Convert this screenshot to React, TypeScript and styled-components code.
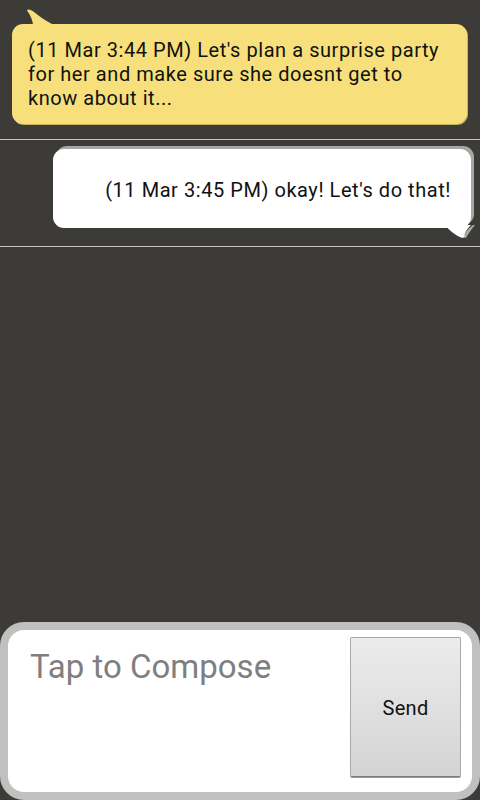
import React from 'react';
import styled, { createGlobalStyle, css } from 'styled-components';

const GlobalStyle = createGlobalStyle`
  html, body {
    margin: 0;
    padding: 0;
    background: #3d3b37;
  }
  * {
    box-sizing: border-box;
  }
`;

type Side = 'in' | 'out';

type Message = {
  id: number;
  side: Side;
  time: string;
  text: string;
};

const messages: Message[] = [
  {
    id: 1,
    side: 'in',
    time: '11 Mar 3:44 PM',
    text: "Let's plan a surprise party for her and make sure she doesnt get to know about it...",
  },
  {
    id: 2,
    side: 'out',
    time: '11 Mar 3:45 PM',
    text: "okay! Let's do that!",
  },
];

const Screen = styled.div`
  width: 480px;
  height: 800px;
  display: flex;
  flex-direction: column;
  background: #3d3b37;
  font-family: Roboto, 'Liberation Sans', sans-serif;
  overflow: hidden;
`;

const Thread = styled.div`
  flex: 1;
  display: flex;
  flex-direction: column;
`;

const Row = styled.div<{ $side: Side }>`
  display: flex;
  border-bottom: 1px solid #c4c4c4;
  ${({ $side }) =>
    $side === 'in'
      ? css`
          justify-content: flex-start;
          padding: 24px 13px 15px 12px;
        `
      : css`
          justify-content: flex-end;
          padding: 9px 9px 18px 53px;
        `}
`;

const Bubble = styled.div<{ $side: Side }>`
  position: relative;
  flex: 1;
  border-radius: 11px;
  font-size: 20px;
  letter-spacing: 0.55px;
  line-height: 24px;
  color: #111;
  ${({ $side }) =>
    $side === 'in'
      ? css`
          background: #f7e07b;
          padding: 14px 12px 14px 16px;
          min-height: 100px;
          box-shadow: 1px 1px 0 #c7b35c;
        `
      : css`
          background: #fff;
          padding: 3px 20px 0;
          height: 79px;
          display: flex;
          align-items: center;
          justify-content: flex-end;
          box-shadow: 3px -3px 0 #a6a6a6;
        `}
`;

const Tail = styled.svg<{ $side: Side }>`
  position: absolute;
  ${({ $side }) =>
    $side === 'in'
      ? css`
          left: 12px;
          top: -15px;
          width: 30px;
          height: 17px;
        `
      : css`
          right: -4px;
          bottom: -11px;
          width: 30px;
          height: 14px;
        `}
`;

const Composer = styled.div`
  height: 178px;
  display: flex;
  background: #fff;
  border: 8px solid #c0c0c0;
  border-radius: 24px;
  padding: 7px 11px 15px 0;
`;

const ComposeInput = styled.textarea`
  flex: 1;
  border: none;
  outline: none;
  resize: none;
  background: transparent;
  padding: 10px 10px 0 22px;
  font-family: Roboto, 'Liberation Sans', sans-serif;
  font-size: 33px;
  color: #222;

  &::placeholder {
    color: #7f7f7f;
  }
`;

const SendButton = styled.button`
  width: 111px;
  height: 140px;
  border: 1px solid #a9a9a9;
  border-bottom-color: #7c7c7c;
  border-radius: 2px;
  background: linear-gradient(#ececec, #d4d4d4);
  box-shadow: 0 1px 0 #9a9a9a;
  font-family: Roboto, 'Liberation Sans', sans-serif;
  font-size: 20px;
  letter-spacing: 0.3px;
  color: #111;
  padding: 2px 0 0;
`;

const IncomingTail = () => (
  <Tail $side="in" viewBox="0 0 30 17">
    <path
      d="M3 1.5 C4 -0.5 7 0.5 10 3 C16 8 22 12 28 15 L28 17 L9 17 C9 12 7 7 3 1.5 Z"
      fill="#f7e07b"
    />
  </Tail>
);

const OutgoingTail = () => (
  <Tail $side="out" viewBox="0 0 30 14">
    <path d="M17 12 C19 8 23 4 28 0 L30 0 C26 5 23 9 21 13 Z" fill="#a6a6a6" />
    <path
      d="M0 0 C4 5 10 10 16 12.5 C18 13 20 12.5 19.5 11 C19 8 22 4 26 0 Z"
      fill="#fff"
    />
  </Tail>
);

const App = () => (
  <>
    <GlobalStyle />
    <Screen>
      <Thread>
        {messages.map((m) => (
          <Row key={m.id} $side={m.side}>
            <Bubble $side={m.side}>
              {m.side === 'in' ? <IncomingTail /> : <OutgoingTail />}
              ({m.time}) {m.text}
            </Bubble>
          </Row>
        ))}
      </Thread>
      <Composer>
        <ComposeInput placeholder="Tap to Compose" />
        <SendButton>Send</SendButton>
      </Composer>
    </Screen>
  </>
);

export default App;
